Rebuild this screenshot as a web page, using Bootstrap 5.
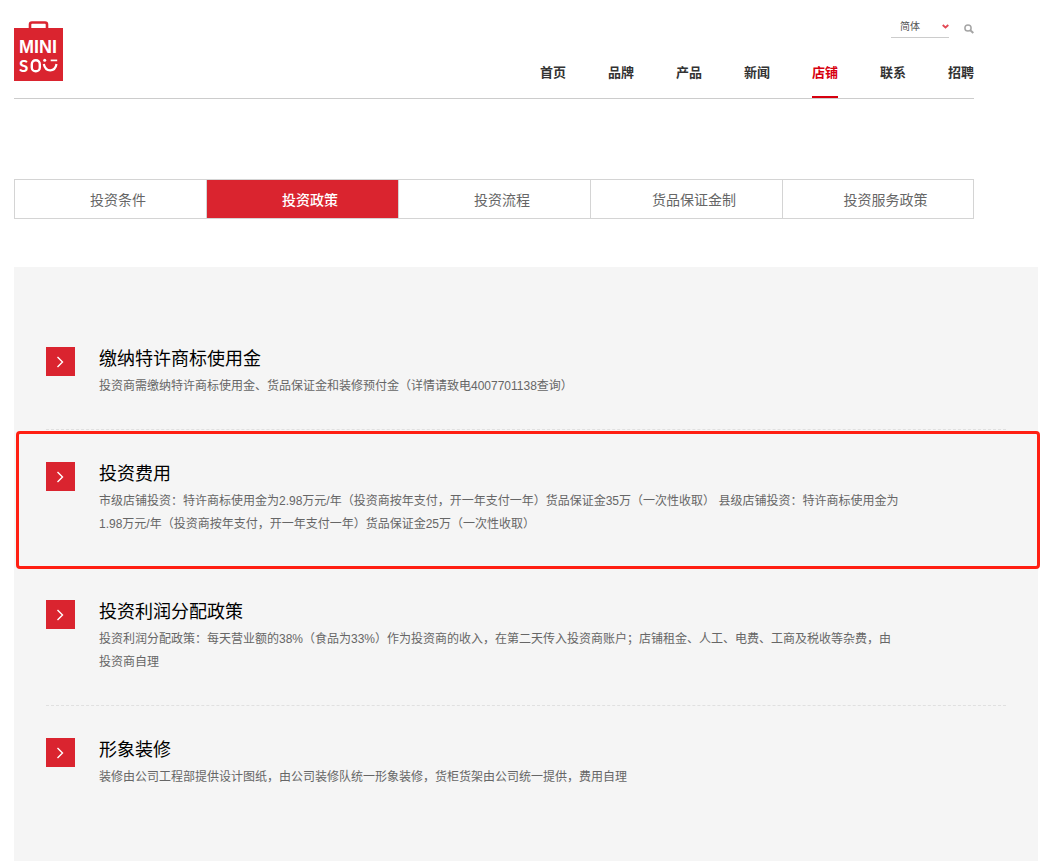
<!DOCTYPE html>
<html lang="zh-CN">
<head>
<meta charset="utf-8">
<meta name="viewport" content="width=device-width, initial-scale=1">
<title>MINISO 店铺 - 投资政策</title>
<link href="https://cdn.jsdelivr.net/npm/bootstrap@5.3.0/dist/css/bootstrap.min.css" rel="stylesheet">
<style>
  :root { --brand: #da242f; --edge: #d4d4d4; }
  body { font-family: "Liberation Sans", "Noto Sans CJK SC", sans-serif; font-size: 12px; line-height: 23px; color: #666; background: #fff; }
  .page { padding: 20px 2px 0 14px; }
  .page-col { margin-right: 64px; }
  .site-head { border-bottom: 1px solid #ccc; height: 79px; }
  .brand-logo { margin-top: 1px; line-height: 0; }
  .lang-tools { gap: 15px; }
  .lang-select { width: 58px; height: 18px; padding: 0 0 4px 9px; font-size: 10px; line-height: 13px; color: #555; border: 0; border-bottom: 1px solid #ccc; border-radius: 0; appearance: none;
    background: url("data:image/svg+xml,%3Csvg xmlns='http://www.w3.org/2000/svg' viewBox='0 0 7 5'%3E%3Cpath d='M.7 1l2.8 2.5L6.300 1' fill='none' stroke='%23e24854' stroke-width='1.8'/%3E%3C/svg%3E") no-repeat right 0 top 4px / 7px 5px; }
  .search-btn { line-height: 0; }
  .main-nav { gap: 42px; }
  .main-nav .nav-link { padding: 0; height: 37px; font-size: 13px; line-height: 23px; font-weight: 600; color: #333; border-bottom: 2px solid transparent; }
  .main-nav .nav-link.active { color: #d7000f; border-color: #d7000f; }
  .tabs { margin-top: 80px; border: solid var(--edge); border-width: 1px 0; }
  .tabs .nav-item { border-left: 1px solid var(--edge); }
  .tabs .nav-item:last-child { border-right: 1px solid var(--edge); }
  .tabs .nav-link { height: 38px; padding: 0 0 0 15px; font-size: 14px; line-height: 40px; color: #666; border-radius: 0; }
  .tabs .nav-link.active { color: #fff; font-weight: 500; background: var(--brand); }
  .policy-panel { margin-top: 48px; padding: 48px 32px; background: #f5f5f5; }
  .policy { gap: 24px; padding: 32px 0; border-bottom: 1px dashed #e0e0e0; }
  .policy:last-child { border-bottom: 0; }
  .policy-text { padding-top: 1px; margin-bottom: -1px; }
  .policy h2 { margin: 0 0 4px; font-size: 18px; line-height: 23px; font-weight: 400; color: #000; }
  .policy p { max-width: 802px; margin: 0; }
  .arrow-btn { width: 29px; height: 29px; background: var(--brand); }
  .highlight { top: 1px; right: -34px; bottom: -2px; left: -30px; border: 3px solid #ff1f12; border-radius: 4px; pointer-events: none; }
</style>
</head>
<body>
<div class="page min-vh-100 d-flex flex-column">
  <header class="site-head page-col d-flex justify-content-between">
    <a class="brand-logo" href="#" aria-label="MINISO">
      <svg width="49" height="60" viewBox="0 0 49 60">
        <path d="M16 8V3.500Q16 1.500 18 1.500H31Q33 1.500 33 3.500V8" fill="none" stroke="#da242f" stroke-width="2.600"/>
        <rect y="7" width="49" height="53" fill="#da242f"/>
        <g fill="#fff" font-weight="700">
          <text x="5" y="32" font-size="18" font-family="Liberation Sans, sans-serif">MINI</text>
          <text x="5" y="51" font-size="17" font-family="Lato, sans-serif">S</text>
        </g>
        <rect x="17.800" y="39.300" width="8" height="11" rx="3.900" fill="none" stroke="#fff" stroke-width="2.400"/>
        <circle cx="30.700" cy="39.300" r="1.500" fill="#fff"/>
        <path d="M36.700 39.400h6.500" stroke="#fff" stroke-width="1.700"/>
        <path d="M29.800 43C31.500 51.500 41 51.500 42.500 43" fill="none" stroke="#fff" stroke-width="2.200"/>
      </svg>
    </a>
    <div class="d-flex flex-column justify-content-between align-items-end">
      <form class="lang-tools d-flex align-items-center">
        <select class="lang-select" aria-label="语言"><option>简体</option><option>English</option></select>
        <button type="button" class="search-btn border-0 bg-transparent p-0" aria-label="搜索">
          <svg width="10" height="10" viewBox="0 0 10 10" fill="none" stroke="#a5a5a5"><circle cx="4" cy="4" r="3.100" stroke-width="1.500"/><path d="M6.300 6.300l3 2.700" stroke-width="2"/></svg>
        </button>
      </form>
      <nav class="main-nav nav flex-nowrap">
        <a class="nav-link" href="#">首页</a>
        <a class="nav-link" href="#">品牌</a>
        <a class="nav-link" href="#">产品</a>
        <a class="nav-link" href="#">新闻</a>
        <a class="nav-link active" aria-current="page" href="#">店铺</a>
        <a class="nav-link" href="#">联系</a>
        <a class="nav-link" href="#">招聘</a>
      </nav>
    </div>
  </header>

  <ul class="tabs page-col nav row-cols-5 flex-nowrap mb-0">
    <li class="nav-item text-center"><a class="nav-link" href="#">投资条件</a></li>
    <li class="nav-item text-center"><a class="nav-link active" href="#">投资政策</a></li>
    <li class="nav-item text-center"><a class="nav-link" href="#">投资流程</a></li>
    <li class="nav-item text-center"><a class="nav-link" href="#">货品保证金制</a></li>
    <li class="nav-item text-center"><a class="nav-link" href="#">投资服务政策</a></li>
  </ul>

  <main class="policy-panel flex-grow-1">
    <article class="policy d-flex">
      <a class="arrow-btn d-flex flex-shrink-0 align-items-center justify-content-center" href="#" aria-label="展开"><svg width="9" height="13" viewBox="0 0 9 13" fill="none" stroke="#fff" stroke-width="1.400"><path d="M1.500 2l5 5-5 5"/></svg></a>
      <div class="policy-text"><h2>缴纳特许商标使用金</h2><p>投资商需缴纳特许商标使用金、货品保证金和装修预付金（详情请致电4007701138查询）</p></div>
    </article>
    <article class="policy d-flex position-relative">
      <a class="arrow-btn d-flex flex-shrink-0 align-items-center justify-content-center" href="#" aria-label="展开"><svg width="9" height="13" viewBox="0 0 9 13" fill="none" stroke="#fff" stroke-width="1.400"><path d="M1.500 2l5 5-5 5"/></svg></a>
      <div class="policy-text"><h2>投资费用</h2><p>市级店铺投资：特许商标使用金为2.98万元/年（投资商按年支付，开一年支付一年）货品保证金35万（一次性收取） 县级店铺投资：特许商标使用金为1.98万元/年（投资商按年支付，开一年支付一年）货品保证金25万（一次性收取）</p></div>
      <div class="highlight position-absolute"></div>
    </article>
    <article class="policy d-flex">
      <a class="arrow-btn d-flex flex-shrink-0 align-items-center justify-content-center" href="#" aria-label="展开"><svg width="9" height="13" viewBox="0 0 9 13" fill="none" stroke="#fff" stroke-width="1.400"><path d="M1.500 2l5 5-5 5"/></svg></a>
      <div class="policy-text"><h2>投资利润分配政策</h2><p>投资利润分配政策：每天营业额的38%（食品为33%）作为投资商的收入，在第二天传入投资商账户；店铺租金、人工、电费、工商及税收等杂费，由投资商自理</p></div>
    </article>
    <article class="policy d-flex">
      <a class="arrow-btn d-flex flex-shrink-0 align-items-center justify-content-center" href="#" aria-label="展开"><svg width="9" height="13" viewBox="0 0 9 13" fill="none" stroke="#fff" stroke-width="1.400"><path d="M1.500 2l5 5-5 5"/></svg></a>
      <div class="policy-text"><h2>形象装修</h2><p>装修由公司工程部提供设计图纸，由公司装修队统一形象装修，货柜货架由公司统一提供，费用自理</p></div>
    </article>
  </main>
</div>
<script src="https://cdn.jsdelivr.net/npm/bootstrap@5.3.0/dist/js/bootstrap.bundle.min.js"></script>
</body>
</html>
